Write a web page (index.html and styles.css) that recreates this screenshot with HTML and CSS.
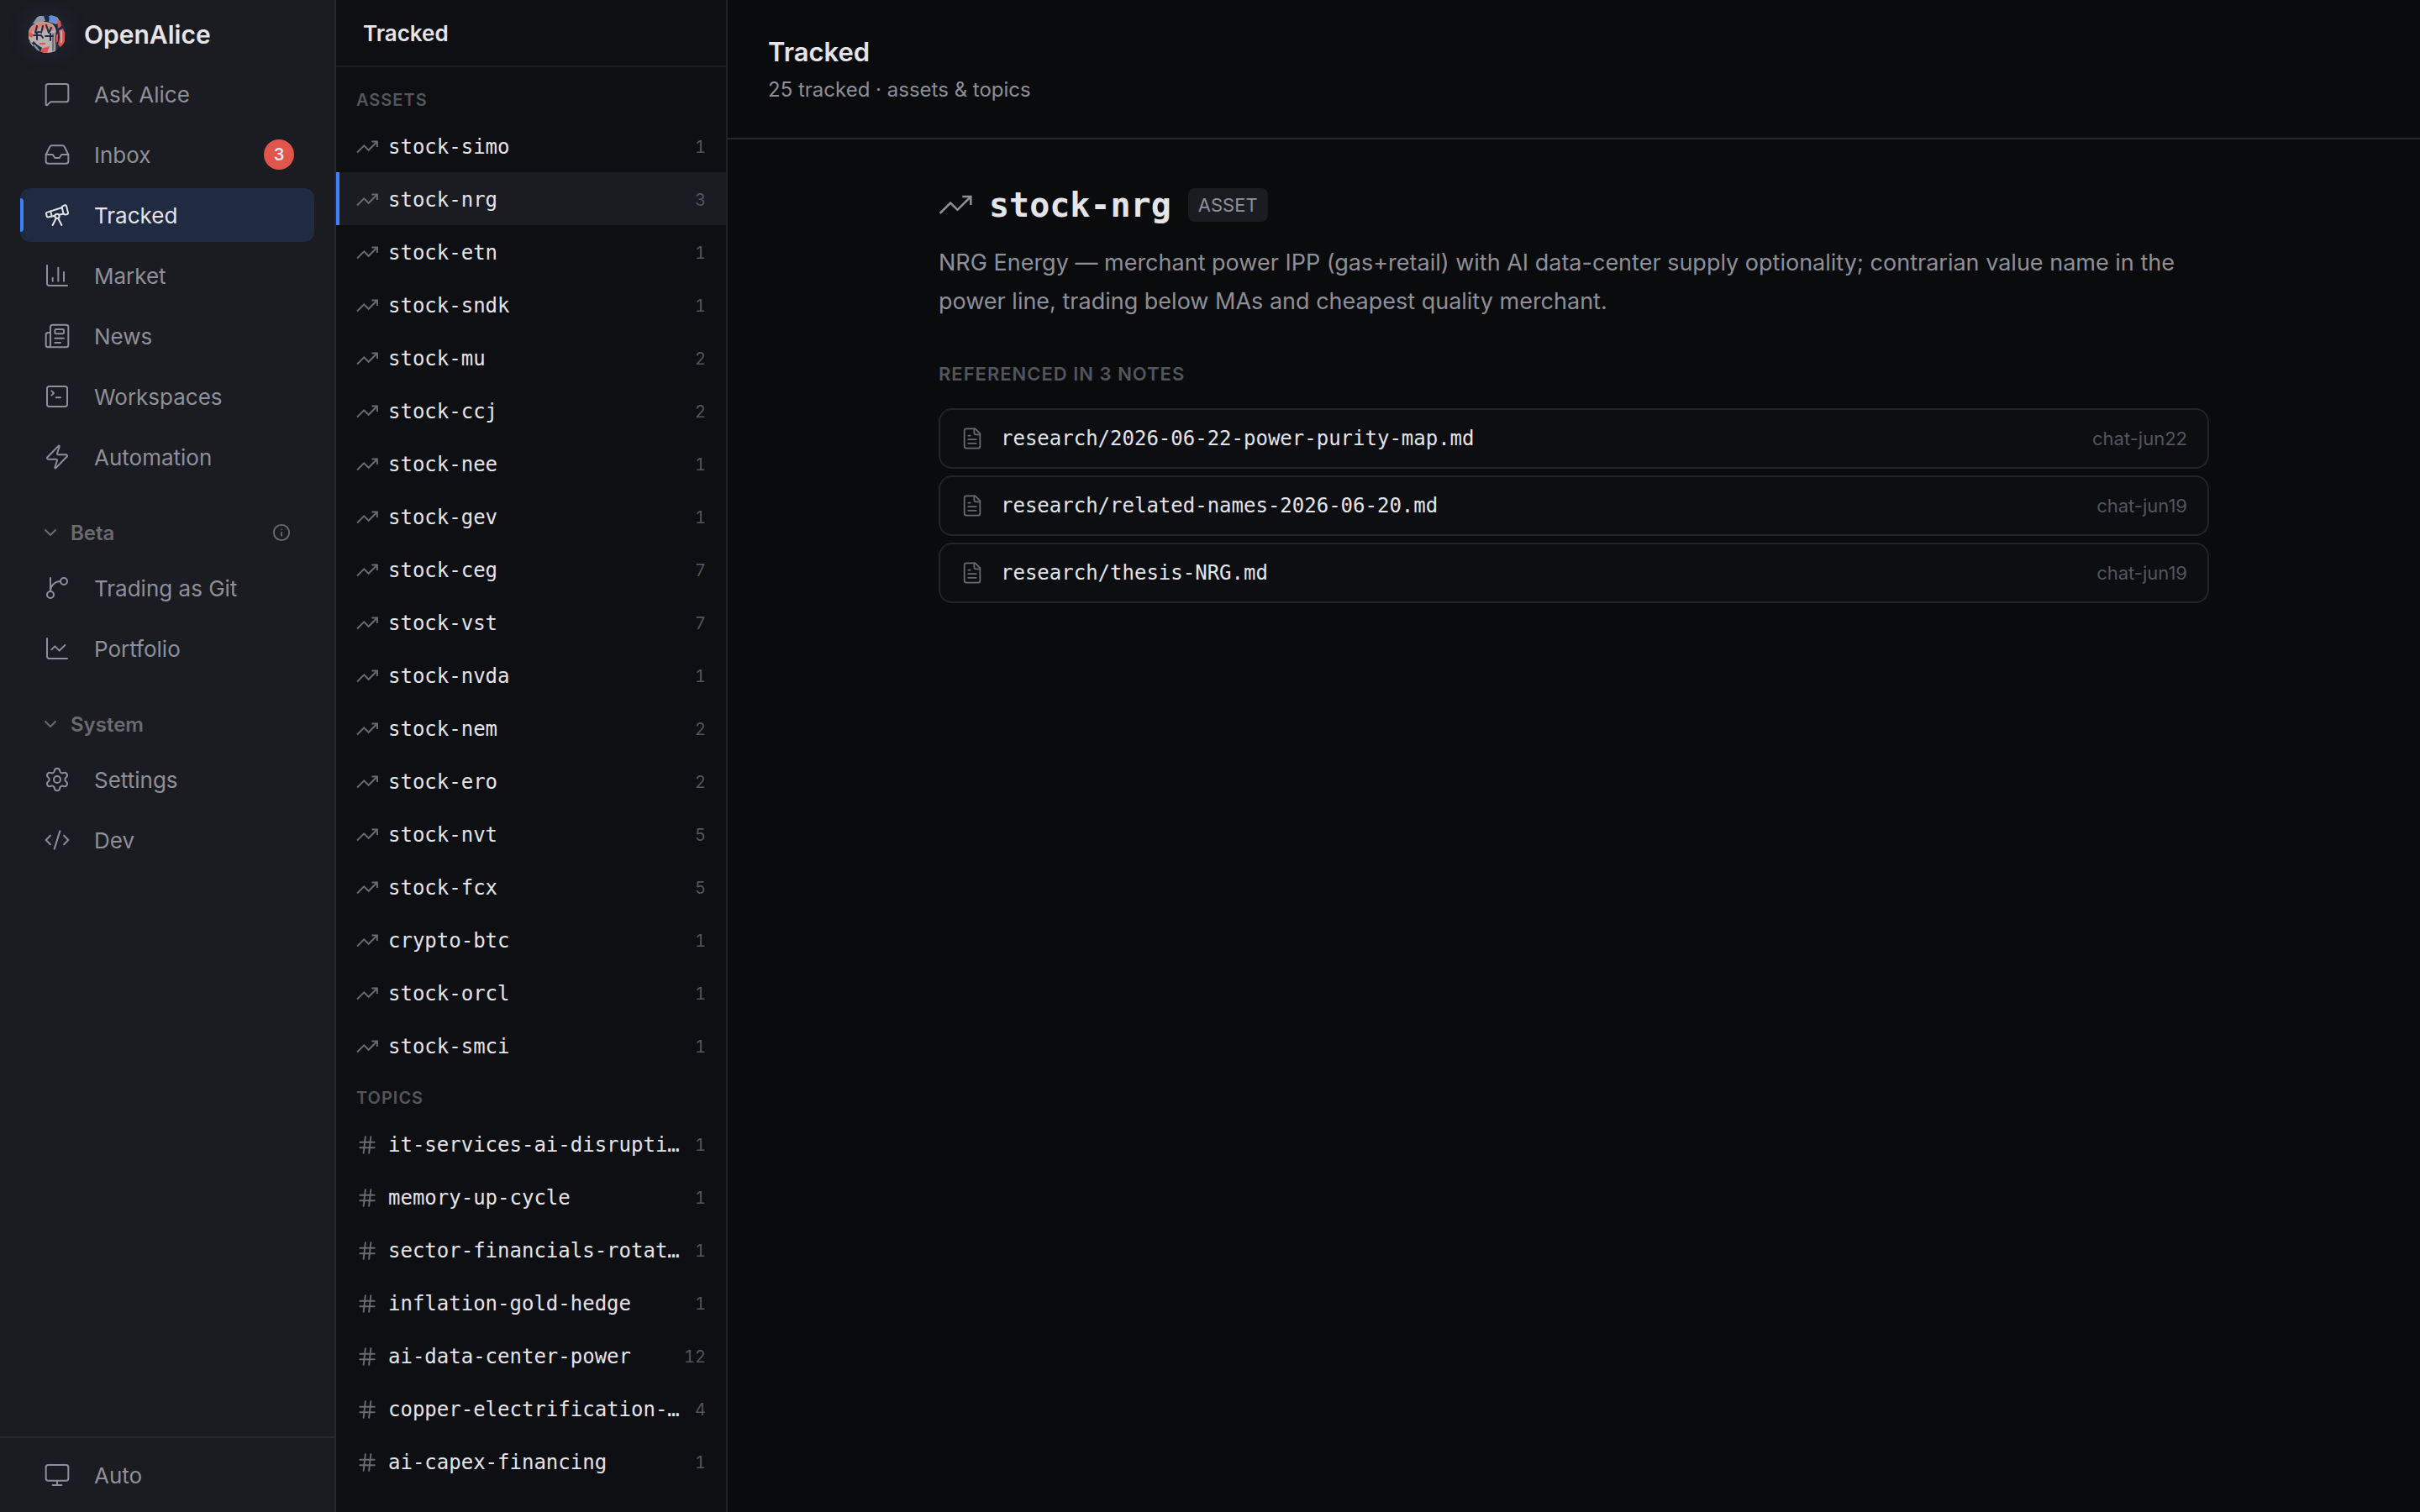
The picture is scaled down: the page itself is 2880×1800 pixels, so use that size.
FILE: index.html
```html
<!DOCTYPE html>
<html lang="en">
<head>
    <meta charset="UTF-8">
    <meta name="viewport" content="width=device-width, initial-scale=1.0">
    <title>OpenAlice - Tracked</title>
    <link rel="stylesheet" href="styles.css">
</head>
<body>
    <!-- shared icons -->
    <svg class="sprite" aria-hidden="true">
        <symbol id="trend" viewBox="0 0 24 24">
            <path d="M23 6l-9.500 9.500-5-5L1 18" stroke-linecap="butt" stroke-linejoin="miter"/>
            <path d="M17 6h6v6" stroke-linecap="butt" stroke-linejoin="miter"/>
        </symbol>
        <symbol id="hash" viewBox="0 0 24 24">
            <path d="M4 9h16M4 15h16M10 3L8 21M16 3l-2 18"/>
        </symbol>
        <symbol id="file" viewBox="0 0 24 24">
            <path d="M15 2H6a2 2 0 0 0-2 2v16a2 2 0 0 0 2 2h12a2 2 0 0 0 2-2V7z"/>
            <path d="M14 2v4a2 2 0 0 0 2 2h4M10 9H8M16 13H8M16 17H8"/>
        </symbol>
        <symbol id="chevron" viewBox="0 0 24 24">
            <path d="m6 9 6 6 6-6"/>
        </symbol>
    </svg>

    <div class="app">
        <aside class="sidebar">
            <div class="brand">
                <svg class="avatar" viewBox="0 0 48 48" aria-hidden="true">
                    <clipPath id="round"><circle cx="24" cy="24" r="23"/></clipPath>
                    <g clip-path="url(#round)">
                        <rect width="48" height="48" fill="#1c2a45"/>
                        <path d="M7 12L13 3h7l2 6-8 3zM28 2l8 2 3 5-4 4-9-3z" fill="#8d96a3"/>
                        <path d="M26 3l8 1 3 5-5 2-5-3z" fill="#5a8ee0"/>
                        <path d="M2 23C3 14 11 10 20 10c11 0 15 6 15 14v20l-5 4H14L7 38 2 30z" fill="#b7b0ae"/>
                        <path d="M2 23C4 14 11 11 20 11c8 0 12 4 13 9l-6 2-3-7-4 6-3-6-5 8-5-2-3 6z" fill="#d98377"/>
                        <path d="M12 15l-2 8 5-1M19 15l-2 8M23 14l3 9 3-6M8 26h9l2 3M22 27h9M12 24v7M28 24v8" fill="none" stroke="#1c2a45" stroke-width="2"/>
                        <path d="M36 8l4 1 1 6-4 3zM38 20l5-2 2 5v12l-5 5-3-3 2-8zM34 27l3-3v9l-3 3zM3 22l5 3-2 4-4-2zM4 37l6 3 3 5-4 1-5-5z" fill="#e0554b"/>
                        <path d="M31 24v20M34 23v21" stroke="#1c2a45" stroke-width="1"/>
                        <path d="M41 21v13" stroke="#b7b0ae" stroke-width="2"/>
                        <path d="M15 35h7v2h-7z" fill="#e0554b"/>
                        <path d="M8 33l4 4 6 4v6H9l-5-9z" fill="#1c2a45"/>
                        <path d="M17 42l10-3-3 8h-8z" fill="#e0554b"/>
                        <path d="M9 38l5 6M3 34l4 4" stroke="#8d96a3" stroke-width="2"/>
                    </g>
                </svg>
                <span class="brand-name">OpenAlice</span>
            </div>

            <nav class="nav">
                <a class="nav-item" href="#">
                    <svg class="icon" viewBox="0 0 24 24"><path d="M22 17a2 2 0 0 1-2 2H6.828a2 2 0 0 0-1.414.586l-2.202 2.202A.71.71 0 0 1 2 21.286V5a2 2 0 0 1 2-2h16a2 2 0 0 1 2 2z"/></svg>
                    <span>Ask Alice</span>
                </a>
                <a class="nav-item" href="#">
                    <svg class="icon" viewBox="0 0 24 24"><path d="M22 12h-6l-2 3h-4l-2-3H2"/><path d="M5.450 5.110 2 12v6a2 2 0 0 0 2 2h16a2 2 0 0 0 2-2v-6l-3.450-6.890A2 2 0 0 0 16.760 4H7.240a2 2 0 0 0-1.790 1.110z"/></svg>
                    <span>Inbox</span>
                    <span class="badge">3</span>
                </a>
                <a class="nav-item active" href="#">
                    <svg class="icon" viewBox="0 0 24 24"><path d="m10.065 12.493-6.180 1.318a.934.934 0 0 1-1.108-.702l-.537-2.150a1.070 1.070 0 0 1 .691-1.265l13.504-4.440"/><path d="m13.560 11.747 4.332-.924"/><path d="m16 21-3.105-6.210"/><path d="M16.485 5.940a2 2 0 0 1 1.455-2.425l1.090-.272a1 1 0 0 1 1.212.727l1.515 6.060a1 1 0 0 1-.727 1.213l-1.090.272a2 2 0 0 1-2.425-1.455z"/><path d="m6.158 8.633 1.114 4.456"/><path d="m8 21 3.105-6.210"/><circle cx="12" cy="13" r="2"/></svg>
                    <span>Tracked</span>
                </a>
                <a class="nav-item" href="#">
                    <svg class="icon" viewBox="0 0 24 24"><path d="M3 3v16a2 2 0 0 0 2 2h16M18 17V9M13 17V5M8 17v-3"/></svg>
                    <span>Market</span>
                </a>
                <a class="nav-item" href="#">
                    <svg class="icon" viewBox="0 0 24 24"><path d="M15 18h-5M18 14h-8"/><path d="M4 22h16a2 2 0 0 0 2-2V4a2 2 0 0 0-2-2H8a2 2 0 0 0-2 2v16a2 2 0 0 1-4 0v-9a2 2 0 0 1 2-2h2"/><rect x="10" y="6" width="8" height="4" rx="1"/></svg>
                    <span>News</span>
                </a>
                <a class="nav-item" href="#">
                    <svg class="icon" viewBox="0 0 24 24"><path d="m7 11 2-2-2-2M11 13h4"/><rect x="3" y="3" width="18" height="18" rx="2"/></svg>
                    <span>Workspaces</span>
                </a>
                <a class="nav-item" href="#">
                    <svg class="icon" viewBox="0 0 24 24"><path d="M4 14a1 1 0 0 1-.780-1.630l9.900-10.200a.5.5 0 0 1 .860.460l-1.920 6.020A1 1 0 0 0 13 10h7a1 1 0 0 1 .780 1.630l-9.900 10.200a.5.5 0 0 1-.860-.460l1.920-6.020A1 1 0 0 0 11 14z"/></svg>
                    <span>Automation</span>
                </a>

                <button class="nav-group" type="button">
                    <svg class="icon-chevron"><use href="#chevron"/></svg>
                    <span>Beta</span>
                    <svg class="icon-info" viewBox="0 0 24 24"><circle cx="12" cy="12" r="10"/><path d="M12 16v-4M12 8v0"/></svg>
                </button>
                <a class="nav-item" href="#">
                    <svg class="icon" viewBox="0 0 24 24"><path d="M15 6a9 9 0 0 0-9 9V3"/><circle cx="18" cy="6" r="3"/><circle cx="6" cy="18" r="3"/></svg>
                    <span>Trading as Git</span>
                </a>
                <a class="nav-item" href="#">
                    <svg class="icon" viewBox="0 0 24 24"><path d="M3 3v16a2 2 0 0 0 2 2h16M19 9l-5 5-4-4-3 3"/></svg>
                    <span>Portfolio</span>
                </a>

                <button class="nav-group" type="button">
                    <svg class="icon-chevron"><use href="#chevron"/></svg>
                    <span>System</span>
                </button>
                <a class="nav-item" href="#">
                    <svg class="icon" viewBox="0 0 24 24"><path d="M9.671 4.136a2.340 2.340 0 0 1 4.659 0 2.340 2.340 0 0 0 3.319 1.915 2.340 2.340 0 0 1 2.330 4.033 2.340 2.340 0 0 0 0 3.831 2.340 2.340 0 0 1-2.330 4.033 2.340 2.340 0 0 0-3.319 1.915 2.340 2.340 0 0 1-4.659 0 2.340 2.340 0 0 0-3.320-1.915 2.340 2.340 0 0 1-2.330-4.033 2.340 2.340 0 0 0 0-3.831A2.340 2.340 0 0 1 6.350 6.051a2.340 2.340 0 0 0 3.319-1.915"/><circle cx="12" cy="12" r="3"/></svg>
                    <span>Settings</span>
                </a>
                <a class="nav-item" href="#">
                    <svg class="icon" viewBox="0 0 24 24"><path d="m18 16 4-4-4-4M6 8l-4 4 4 4M14.500 4l-5 16"/></svg>
                    <span>Dev</span>
                </a>
            </nav>

            <div class="sidebar-footer">
                <button class="nav-item" type="button">
                    <svg class="icon" viewBox="0 0 24 24"><rect x="2" y="3" width="20" height="14" rx="2"/><path d="M8 21h8M12 17v4"/></svg>
                    <span>Auto</span>
                </button>
            </div>
        </aside>

        <section class="panel">
            <h2 class="panel-title">Tracked</h2>
            <div class="panel-list">
                <h3 class="list-label">Assets</h3>
                <a class="row" href="#"><svg class="row-icon"><use href="#trend"/></svg><span class="row-name">stock-simo</span><span class="row-count">1</span></a>
                <a class="row selected" href="#"><svg class="row-icon"><use href="#trend"/></svg><span class="row-name">stock-nrg</span><span class="row-count">3</span></a>
                <a class="row" href="#"><svg class="row-icon"><use href="#trend"/></svg><span class="row-name">stock-etn</span><span class="row-count">1</span></a>
                <a class="row" href="#"><svg class="row-icon"><use href="#trend"/></svg><span class="row-name">stock-sndk</span><span class="row-count">1</span></a>
                <a class="row" href="#"><svg class="row-icon"><use href="#trend"/></svg><span class="row-name">stock-mu</span><span class="row-count">2</span></a>
                <a class="row" href="#"><svg class="row-icon"><use href="#trend"/></svg><span class="row-name">stock-ccj</span><span class="row-count">2</span></a>
                <a class="row" href="#"><svg class="row-icon"><use href="#trend"/></svg><span class="row-name">stock-nee</span><span class="row-count">1</span></a>
                <a class="row" href="#"><svg class="row-icon"><use href="#trend"/></svg><span class="row-name">stock-gev</span><span class="row-count">1</span></a>
                <a class="row" href="#"><svg class="row-icon"><use href="#trend"/></svg><span class="row-name">stock-ceg</span><span class="row-count">7</span></a>
                <a class="row" href="#"><svg class="row-icon"><use href="#trend"/></svg><span class="row-name">stock-vst</span><span class="row-count">7</span></a>
                <a class="row" href="#"><svg class="row-icon"><use href="#trend"/></svg><span class="row-name">stock-nvda</span><span class="row-count">1</span></a>
                <a class="row" href="#"><svg class="row-icon"><use href="#trend"/></svg><span class="row-name">stock-nem</span><span class="row-count">2</span></a>
                <a class="row" href="#"><svg class="row-icon"><use href="#trend"/></svg><span class="row-name">stock-ero</span><span class="row-count">2</span></a>
                <a class="row" href="#"><svg class="row-icon"><use href="#trend"/></svg><span class="row-name">stock-nvt</span><span class="row-count">5</span></a>
                <a class="row" href="#"><svg class="row-icon"><use href="#trend"/></svg><span class="row-name">stock-fcx</span><span class="row-count">5</span></a>
                <a class="row" href="#"><svg class="row-icon"><use href="#trend"/></svg><span class="row-name">crypto-btc</span><span class="row-count">1</span></a>
                <a class="row" href="#"><svg class="row-icon"><use href="#trend"/></svg><span class="row-name">stock-orcl</span><span class="row-count">1</span></a>
                <a class="row" href="#"><svg class="row-icon"><use href="#trend"/></svg><span class="row-name">stock-smci</span><span class="row-count">1</span></a>

                <h3 class="list-label">Topics</h3>
                <a class="row" href="#"><svg class="row-icon"><use href="#hash"/></svg><span class="row-name">it-services-ai-disrupti…</span><span class="row-count">1</span></a>
                <a class="row" href="#"><svg class="row-icon"><use href="#hash"/></svg><span class="row-name">memory-up-cycle</span><span class="row-count">1</span></a>
                <a class="row" href="#"><svg class="row-icon"><use href="#hash"/></svg><span class="row-name">sector-financials-rotat…</span><span class="row-count">1</span></a>
                <a class="row" href="#"><svg class="row-icon"><use href="#hash"/></svg><span class="row-name">inflation-gold-hedge</span><span class="row-count">1</span></a>
                <a class="row" href="#"><svg class="row-icon"><use href="#hash"/></svg><span class="row-name">ai-data-center-power</span><span class="row-count">12</span></a>
                <a class="row" href="#"><svg class="row-icon"><use href="#hash"/></svg><span class="row-name">copper-electrification-…</span><span class="row-count">4</span></a>
                <a class="row" href="#"><svg class="row-icon"><use href="#hash"/></svg><span class="row-name">ai-capex-financing</span><span class="row-count">1</span></a>
            </div>
        </section>

        <main class="main">
            <header class="main-header">
                <h1>Tracked</h1>
                <p>25 tracked · assets &amp; topics</p>
            </header>

            <article class="detail">
                <div class="detail-title">
                    <svg class="detail-icon"><use href="#trend"/></svg>
                    <h2>stock-nrg</h2>
                    <span class="tag">ASSET</span>
                </div>
                <p class="summary">NRG Energy — merchant power IPP (gas+retail) with AI data-center supply optionality; contrarian value name in the power line, trading below MAs and cheapest quality merchant.</p>

                <h3 class="notes-label">Referenced in 3 notes</h3>
                <div class="notes">
                    <a class="note" href="#">
                        <svg class="note-icon"><use href="#file"/></svg>
                        <span class="note-path">research/2026-06-22-power-purity-map.md</span>
                        <span class="note-source">chat-jun22</span>
                    </a>
                    <a class="note" href="#">
                        <svg class="note-icon"><use href="#file"/></svg>
                        <span class="note-path">research/related-names-2026-06-20.md</span>
                        <span class="note-source">chat-jun19</span>
                    </a>
                    <a class="note" href="#">
                        <svg class="note-icon"><use href="#file"/></svg>
                        <span class="note-path">research/thesis-NRG.md</span>
                        <span class="note-source">chat-jun19</span>
                    </a>
                </div>
            </article>
        </main>
    </div>
</body>
</html>
```

FILE: styles.css
```css
* {
    box-sizing: border-box;
}

body {
    margin: 0;
    background-color: #0a0b0d;
    color: #e4e4e9;
    font-family: Inter, "Liberation Sans", sans-serif;
    font-size: 26px;
}

h1, h2, h3, p {
    margin: 0;
}

a {
    color: inherit;
    text-decoration: none;
}

button {
    border: none;
    background: none;
    font-family: inherit;
    cursor: pointer;
}

svg {
    flex-shrink: 0;
    fill: none;
    stroke: currentColor;
    stroke-width: 1.5;
    stroke-linecap: round;
    stroke-linejoin: round;
}

.sprite {
    display: none;
}

.app {
    display: flex;
    height: 100vh;
}

/* Sidebar */
.sidebar {
    display: flex;
    flex-direction: column;
    flex-shrink: 0;
    width: 400px;
    background-color: #1b1c21;
    border-right: 2px solid #27282d;
}

.brand {
    display: flex;
    align-items: center;
    gap: 20px;
    height: 80px;
    padding-left: 32px;
}

.avatar {
    width: 48px;
    height: 48px;
    border-radius: 50%;
    box-shadow: 0 0 24px rgba(60, 70, 95, 0.3);
    stroke: none;
}

.brand-name {
    padding-top: 2px;
    font-size: 30px;
    font-weight: 600;
}

.nav {
    display: flex;
    flex-direction: column;
    flex: 1;
    gap: 8px;
    padding: 0 24px;
}

.nav-item {
    display: flex;
    align-items: center;
    gap: 28px;
    position: relative;
    width: 100%;
    height: 64px;
    padding: 0 24px 0 28px;
    border-radius: 12px;
    color: #8e8f99;
    font-size: 26px;
}

.nav-item.active {
    background-color: #202b42;
    color: #e4e4e9;
}

.nav-item.active::before {
    content: "";
    position: absolute;
    left: 0;
    top: 12px;
    width: 4px;
    height: 40px;
    border-radius: 0 4px 4px 0;
    background-color: #3b82f6;
}

.icon {
    width: 32px;
    height: 32px;
}

.badge {
    min-width: 36px;
    margin-left: auto;
    border-radius: 18px;
    background-color: #e0564c;
    color: #e4e4e9;
    font-size: 20px;
    font-weight: 600;
    line-height: 36px;
    text-align: center;
}

.nav-group {
    display: flex;
    align-items: center;
    gap: 12px;
    height: 60px;
    margin-top: 20px;
    margin-bottom: -4px;
    padding: 0 28px 0 24px;
    color: #6a6b70;
    font-size: 24px;
    font-weight: 600;
}

.icon-chevron {
    width: 24px;
    height: 24px;
    stroke-width: 2;
}

.icon-info {
    width: 22px;
    height: 22px;
    margin-left: auto;
    stroke-width: 2;
}

.sidebar-footer {
    padding: 12px 24px;
    border-top: 2px solid #27282d;
}

/* List panel */
.panel {
    display: flex;
    flex-direction: column;
    flex-shrink: 0;
    width: 466px;
    background-color: #0e0f13;
    border-right: 2px solid #1f2024;
}

.panel-title {
    height: 80px;
    padding-left: 32px;
    border-bottom: 2px solid #1b1c20;
    font-size: 26px;
    font-weight: 600;
    line-height: 80px;
}

.panel-list {
    flex: 1;
    padding-top: 8px;
    overflow: hidden;
}

.list-label {
    padding: 16px 24px 8px;
    color: #54555c;
    font-size: 20px;
    font-weight: 600;
    line-height: 30px;
    letter-spacing: 1px;
    text-transform: uppercase;
}

.row {
    display: flex;
    align-items: center;
    gap: 12px;
    height: 63px;
    padding: 2px 24px 0 20px;
    border-left: 4px solid transparent;
}

.row.selected {
    background-color: #1b1c21;
    border-left-color: #3b82f6;
}

.row-icon {
    width: 26px;
    height: 26px;
    color: #6a6b70;
    stroke-width: 1.8;
}

.row-name {
    flex: 1;
    font-family: "DejaVu Sans Mono", monospace;
    font-size: 24px;
    white-space: nowrap;
}

.row-count {
    color: #54555c;
    font-size: 20px;
    font-variant-numeric: tabular-nums;
}

/* Main area */
.main {
    flex: 1;
    min-width: 0;
}

.main-header {
    padding: 40px 48px 38px;
    border-bottom: 2px solid #27282d;
}

.main-header h1 {
    font-size: 31px;
    font-weight: 600;
    line-height: 44px;
    margin-bottom: 4px;
}

.main-header p {
    color: #8e8f99;
    font-size: 24px;
    line-height: 38px;
}

.detail {
    max-width: 1608px;
    margin: 0 auto;
    padding: 48px;
}

.detail-title {
    display: flex;
    align-items: center;
    gap: 20px;
    height: 60px;
}

.detail-title h2 {
    font-family: "DejaVu Sans Mono", monospace;
    font-size: 40px;
}

.detail-icon {
    width: 40px;
    height: 40px;
    color: #8e8f99;
}

.tag {
    padding: 0 12px;
    border-radius: 8px;
    background-color: #1b1c21;
    color: #8e8f99;
    font-size: 22px;
    line-height: 40px;
}

.summary {
    margin-top: 16px;
    color: #8e8f99;
    font-size: 27px;
    line-height: 46px;
}

.notes-label {
    margin: 46px 0 24px;
    color: #54555c;
    font-size: 22px;
    font-weight: 600;
    line-height: 34px;
    letter-spacing: 1px;
    text-transform: uppercase;
}

.notes {
    display: flex;
    flex-direction: column;
    gap: 8px;
}

.note {
    display: flex;
    align-items: center;
    gap: 20px;
    height: 72px;
    padding: 0 24px;
    border: 2px solid #232429;
    border-radius: 16px;
    background-color: #0d0e12;
}

.note-icon {
    width: 28px;
    height: 28px;
    color: #6a6b70;
}

.note-path {
    flex: 1;
    font-family: "DejaVu Sans Mono", monospace;
    font-size: 24px;
}

.note-source {
    color: #54555c;
    font-size: 22px;
}
```
